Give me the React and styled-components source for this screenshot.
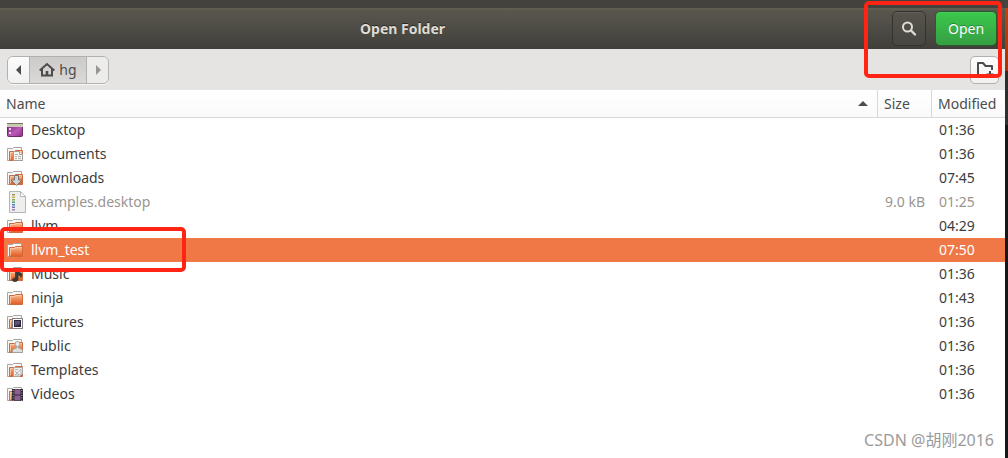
import React from 'react';
import styled, { createGlobalStyle, css } from 'styled-components';

const colors = {
  text: '#3c3c3c',
  headerText: '#4c4c4c',
  dimmed: '#9a9590',
  selected: '#f07746',
  border: '#d9d8d7',
  mark: '#ff2414',
};

const GlobalStyle = createGlobalStyle`
  * {
    box-sizing: border-box;
  }

  body {
    margin: 0;
    background-color: white;
    font-family: "Noto Sans", "Noto Sans CJK SC", sans-serif;
    font-size: 14px;
    color: ${colors.text};
  }

  button {
    font: inherit;
    padding: 0;
    cursor: pointer;
  }
`;

const Screen = styled.div`
  position: relative;
  display: grid;
  grid-template-columns: minmax(0, 1fr) 3px;
  min-height: 100vh;
  overflow: hidden;
`;

const Dialog = styled.main`
  background-color: white;
`;

const Backdrop = styled.div`
  background: linear-gradient(#45443e 8px, #c2410c 8px, #a83208 71px, #2c2c2a 71px, #30302e 125px, #161616 125px);
`;

const ParentBar = styled.div`
  height: 8px;
  background-color: #43423d;
`;

const TitleBar = styled.header`
  display: flex;
  align-items: center;
  gap: 9px;
  height: 41px;
  padding: 0 8px 2px 0;
  border-top: 2px solid #605e50;
  background: linear-gradient(#59574d, #403f3a);
`;

const Title = styled.h1`
  flex: 1;
  margin: 0;
  padding-right: 78px;
  font-size: 14px;
  font-weight: 700;
  text-align: center;
  color: #dfdbd2;
  text-shadow: 0 -1px rgba(0, 0, 0, .5);
`;

const HeaderButton = styled.button`
  display: flex;
  align-items: center;
  justify-content: center;
  width: ${props => (props.$suggested ? '62px' : '34px')};
  height: 35px;
  border: 1px solid #33322e;
  border-radius: 5px;
  color: #e0dcd4;
  background: linear-gradient(#56544b, #474640);
  box-shadow: inset 0 1px rgba(255, 255, 255, .08);

  ${props => props.$suggested && css`
    border-color: #2b5a30;
    color: white;
    background: linear-gradient(#3bc84c, #359f42);
    text-shadow: 0 -1px rgba(0, 0, 0, .3);
  `}
`;

const PathBar = styled.nav`
  display: flex;
  align-items: center;
  justify-content: space-between;
  height: 41px;
  padding: 0 6px 0 7px;
  background-color: #e5e4e2;
`;

const PathButtons = styled.div`
  display: flex;
  height: 28px;
  border: 1px solid #b3b1ae;
  border-radius: 6px;
  overflow: hidden;
  box-shadow: 0 1px rgba(255, 255, 255, .7);
`;

const PathButton = styled.button`
  display: flex;
  align-items: center;
  justify-content: center;
  gap: 4px;
  width: ${props => (props.$current ? '58px' : '21px')};
  border: none;
  color: ${colors.headerText};
  background: linear-gradient(#fcfcfc, #f1f1f1);

  &:disabled {
    color: #999590;
    background: #ececeb;
  }

  ${props => props.$current && css`
    border-left: 1px solid #b3b1ae;
    border-right: 1px solid #b3b1ae;
    background: linear-gradient(#cccbca, #dad9d8);
  `}
`;

const NewFolderButton = styled.button`
  display: flex;
  align-items: center;
  justify-content: center;
  width: 29px;
  height: 28px;
  border: 1px solid #b3b1ae;
  border-radius: 5px;
  color: ${colors.headerText};
  background: linear-gradient(#fdfdfd, #f0f0f0);
`;

const Table = styled.table`
  width: 100%;
  table-layout: fixed;
  border-collapse: separate;
  border-spacing: 0;
`;

const ColumnHead = styled.th`
  width: ${props => props.$width || 'auto'};
  height: 28px;
  padding: 0 0 0 6px;
  border-bottom: 1px solid ${colors.border};
  font-weight: 400;
  text-align: left;
  color: ${colors.headerText};
  background: linear-gradient(white, #fafafa);

  & + & {
    border-left: 1px solid ${colors.border};
  }
`;

const HeadLabel = styled.span`
  display: flex;
  align-items: center;
  justify-content: space-between;
  padding-right: 9px;
`;

const Row = styled.tr`
  height: 24px;
  color: ${props => (props.$dimmed ? colors.dimmed : colors.text)};

  ${props => props.$selected && css`
    color: white;
    background-color: ${colors.selected};
  `}
`;

const Cell = styled.td`
  padding: 0 6px;
  line-height: 22px;
  white-space: nowrap;
  text-align: ${props => (props.$right ? 'right' : 'left')};
`;

const TimeCell = styled(Cell)`
  padding: 0 0 0 8px;
`;

const FileName = styled.span`
  display: flex;
  align-items: center;
  gap: 4px;
  height: 24px;
`;

const Mark = styled.div`
  position: absolute;
  border: 4px solid ${colors.mark};
  border-radius: 5px;
  pointer-events: none;
`;

const ButtonMark = styled(Mark)`
  top: 1px;
  right: 6px;
  width: 138px;
  height: 77px;
`;

const RowMark = styled(Mark)`
  top: 227px;
  left: 0;
  width: 186px;
  height: 45px;
`;

const Watermark = styled.div`
  position: absolute;
  right: 14px;
  bottom: 6px;
  font-size: 16px;
  line-height: 24px;
  color: #9b9b9b;
`;

// emblems sit over the lower right corner of the folder
const emblems = {
  documents: (
    <>
      <path d="M7.500 6.500h6l3 3v6h-9z" fill="#f4f4f2" stroke="#a09e9a" />
      <path d="M9 9.500h3M9 11.500h2M12 11.500h3M9 13.500h2M12 13.500h3" stroke="#b4b4b2" />
      <path d="M13.500 6.500v3h3" fill="white" stroke="#a09e9a" />
    </>
  ),
  downloads: (
    <path d="M8.500 6.500h4v4.500h3.500L10.500 16.500 5 11h3.500z" fill="#d3d3d1" stroke="#777" />
  ),
  music: (
    <path d="M9.500 5h1.500c1 2.500 4 2 5 4.500l-1 3c-.5-1.500-1.500-2.500-3-2.500v4.500c0 2.500-5.500 3-5.500.5 0-1.500 1.500-2.200 3-2z" fill="#3b3b3b" stroke="#262626" strokeWidth=".6" />
  ),
  pictures: (
    <>
      <rect x="6.500" y="5.500" width="10" height="10" fill="#f7f7f7" stroke="#85838a" />
      <rect x="8" y="7" width="7" height="7" fill="#2e2740" />
      <path d="M9 8h5v3l-5 2z" fill="#5f5277" />
    </>
  ),
  public: (
    <>
      <path d="M6.500 15.500v-2c0-1 1.500-2 4-2.500V9h2v2c2.500.5 4 1.500 4 2.500v2z" fill="#dededc" stroke="#a3a19e" />
      <circle cx="11.500" cy="7" r="2.500" fill="#e8e8e6" stroke="#a3a19e" />
    </>
  ),
  templates: (
    <>
      <path d="M7.500 6.500h9v6l-3 3h-6z" fill="#eeeeec" stroke="#aaa8a4" />
      <path d="M9 8.500h3M9 14l6-6v6zM9 10l4 4" fill="none" stroke="#b3b3bd" />
    </>
  ),
  videos: (
    <>
      <path d="M6 4h11v12H6z" fill="#2f2a30" />
      <path d="M8.500 4.500h6v5h-6zM8.500 10.500h6v5h-6z" fill="#8a6095" />
      <path d="M7.200 5v11M15.800 5v11" stroke="#b0a8b0" strokeDasharray="1 1.500" />
    </>
  ),
};

const DesktopIcon = () => (
  <svg width="21" height="18" viewBox="0 0 21 18" aria-hidden="true">
    <rect x="1.500" y="2.500" width="15" height="13" rx="1" fill="url(#desktopFill)" stroke="#6d2a6b" />
    <path d="M1 3h16v3H1z" fill="#cbc8b4" />
    <path d="M1 2.500h16" stroke="#77745f" />
    <path d="M3 7h2v2H3zM3 11h2v2H3z" fill="#efcfea" />
  </svg>
);

const FileIcon = () => (
  <svg width="21" height="22" viewBox="0 0 21 22" aria-hidden="true">
    <path d="M3.500.5h11l5 5v16h-16z" fill="#eeeeec" stroke="#b4b4b2" />
    <path d="M14.500.5v5h5z" fill="white" stroke="#b4b4b2" />
    {['#a09a50', '#c0b25c', '#8fa84f', '#4fa07d', '#4f86b8', '#6f72b7', '#9b7ac0'].map((fill, i) => (
      <rect key={fill} x="6" y={3 + i * 2.5} width="3" height="1.500" fill={fill} />
    ))}
  </svg>
);

const FolderIcon = ({ emblem }) => (
  <svg width="21" height="18" viewBox="0 0 21 18" aria-hidden="true">
    <path d="M1.500 15.500v-12h5l1-1h8v13z" fill="#f8f7f5" stroke="#a9a7a3" />
    <path d="M3.500 15.500v-9h5l1-1h7v10z" fill="url(#folderFill)" stroke="#cf6a3d" />
    <path d="M4.500 14.500v-7h4.500l1-1h5.500" fill="none" stroke="#fbd3b6" strokeOpacity=".8" />
    {emblem && emblems[emblem]}
  </svg>
);

const IconGradients = () => (
  <svg width="0" height="0" display="block" aria-hidden="true">
    <defs>
      <linearGradient id="folderFill" x1="0" y1="0" x2="0" y2="1">
        <stop offset="0" stopColor="#f7c39d" />
        <stop offset=".5" stopColor="#ef8850" />
        <stop offset="1" stopColor="#df5a24" />
      </linearGradient>
      <linearGradient id="desktopFill" x1="0" y1="0" x2="1" y2="1">
        <stop offset="0" stopColor="#7c2b79" />
        <stop offset=".6" stopColor="#ba59b6" />
        <stop offset="1" stopColor="#892f85" />
      </linearGradient>
    </defs>
  </svg>
);

const SearchIcon = () => (
  <svg width="16" height="16" viewBox="0 0 16 16" fill="none" stroke="currentColor" aria-hidden="true">
    <circle cx="6.500" cy="6" r="4.500" strokeWidth="2" />
    <path d="M10 9.500l4 4" strokeWidth="2.400" strokeLinecap="round" />
  </svg>
);

const HomeIcon = () => (
  <svg width="16" height="16" viewBox="0 0 16 16" fill="none" stroke="currentColor" strokeWidth="2" aria-hidden="true">
    <path d="M.7 8.500L8 2l7.300 6.500" />
    <path d="M3 7v6.500h10V7" />
    <path d="M8 14V9" strokeWidth="2.600" />
  </svg>
);

const NewFolderIcon = () => (
  <svg width="18" height="18" viewBox="0 0 18 18" fill="none" stroke="currentColor" strokeWidth="2" aria-hidden="true">
    <path d="M9 15H2V2h5l2.500 3H16v4" strokeLinejoin="round" />
    <path d="M14 10v7M10.500 13.500h7" />
  </svg>
);

const Arrow = ({ d }) => (
  <svg width="10" height="10" viewBox="0 0 10 10" fill="currentColor" aria-hidden="true">
    <path d={d} />
  </svg>
);

const files = [
  { name: 'Desktop', kind: 'desktop', time: '01:36' },
  { name: 'Documents', emblem: 'documents', time: '01:36' },
  { name: 'Downloads', emblem: 'downloads', time: '07:45' },
  { name: 'examples.desktop', kind: 'file', size: '9.0 kB', time: '01:25' },
  { name: 'llvm', time: '04:29' },
  { name: 'llvm_test', time: '07:50', selected: true },
  { name: 'Music', emblem: 'music', time: '01:36' },
  { name: 'ninja', time: '01:43' },
  { name: 'Pictures', emblem: 'pictures', time: '01:36' },
  { name: 'Public', emblem: 'public', time: '01:36' },
  { name: 'Templates', emblem: 'templates', time: '01:36' },
  { name: 'Videos', emblem: 'videos', time: '01:36' },
];

const EntryIcon = ({ kind, emblem }) => {
  if (kind === 'desktop') return <DesktopIcon />;
  if (kind === 'file') return <FileIcon />;
  return <FolderIcon emblem={emblem} />;
};

const FileList = () => (
  <Table>
    <thead>
      <tr>
        <ColumnHead scope="col" aria-sort="ascending">
          <HeadLabel>
            Name
            <Arrow d="M0 7l5-5 5 5z" />
          </HeadLabel>
        </ColumnHead>
        <ColumnHead scope="col" $width="54px">Size</ColumnHead>
        <ColumnHead scope="col" $width="74px">Modified</ColumnHead>
      </tr>
    </thead>
    <tbody>
      {files.map(file => (
        <Row key={file.name} $selected={file.selected} $dimmed={file.kind === 'file'}>
          <Cell>
            <FileName>
              <EntryIcon kind={file.kind} emblem={file.emblem} />
              {file.name}
            </FileName>
          </Cell>
          <Cell $right>{file.size}</Cell>
          <TimeCell>{file.time}</TimeCell>
        </Row>
      ))}
    </tbody>
  </Table>
);

const App = () => (
  <Screen>
    <GlobalStyle />
    <Dialog>
      <IconGradients />
      <ParentBar />
      <TitleBar>
        <Title>Open Folder</Title>
        <HeaderButton type="button" aria-label="Search"><SearchIcon /></HeaderButton>
        <HeaderButton type="button" $suggested>Open</HeaderButton>
      </TitleBar>
      <PathBar>
        <PathButtons>
          <PathButton type="button" aria-label="Back"><Arrow d="M7 0v10L2 5z" /></PathButton>
          <PathButton type="button" $current>
            <HomeIcon />
            hg
          </PathButton>
          <PathButton type="button" aria-label="Forward" disabled><Arrow d="M3 0v10l5-5z" /></PathButton>
        </PathButtons>
        <NewFolderButton type="button" aria-label="Create Folder"><NewFolderIcon /></NewFolderButton>
      </PathBar>
      <FileList />
    </Dialog>
    <Backdrop />
    <ButtonMark />
    <RowMark />
    <Watermark>CSDN @胡刚2016</Watermark>
  </Screen>
);

export default App;
